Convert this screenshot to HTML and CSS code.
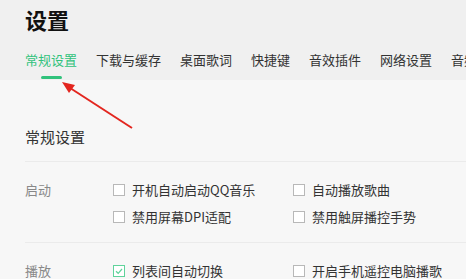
FILE: index.html
```html
<!DOCTYPE html>
<html lang="zh">
<head>
<meta charset="utf-8">
<link rel="stylesheet" href="styles.css">
</head>
<body>
<header class="header">
  <h1 class="title">设置</h1>
  <nav class="tabs">
    <div class="tab active"><span>常规设置</span><i class="bar"></i></div>
    <div class="tab"><span>下载与缓存</span><i class="bar"></i></div>
    <div class="tab"><span>桌面歌词</span><i class="bar"></i></div>
    <div class="tab"><span>快捷键</span><i class="bar"></i></div>
    <div class="tab"><span>音效插件</span><i class="bar"></i></div>
    <div class="tab"><span>网络设置</span><i class="bar"></i></div>
    <div class="tab"><span>音频</span><i class="bar"></i></div>
  </nav>
</header>
<main class="content">
  <h2 class="section-title">常规设置</h2>
  <div class="group">
    <div class="label">启动</div>
    <label class="opt"><span class="box"></span>开机自动启动QQ音乐</label>
    <label class="opt"><span class="box"></span>自动播放歌曲</label>
    <div></div>
    <label class="opt"><span class="box"></span>禁用屏幕DPI适配</label>
    <label class="opt"><span class="box"></span>禁用触屏播控手势</label>
  </div>
  <div class="group">
    <div class="label">播放</div>
    <label class="opt"><span class="box checked"><svg viewBox="0 0 12 12" width="12" height="12"><path d="M3 6.2 L5.2 8.3 L9 4" fill="none" stroke="#5fd39b" stroke-width="1.2"/></svg></span>列表间自动切换</label>
    <label class="opt"><span class="box"></span>开启手机遥控电脑播歌</label>
  </div>
</main>
<svg class="arrow" width="466" height="279" viewBox="0 0 466 279">
  <line x1="132" y1="128" x2="67" y2="86" stroke="#e3261f" stroke-width="2"/>
  <polygon points="62,82 75,85 69,93" fill="#e3261f"/>
</svg>
</body>
</html>
```
FILE: styles.css
```css
* { box-sizing: border-box; margin: 0; padding: 0; }
html, body { width: 466px; height: 279px; overflow: hidden; }
body {
  background: #f7f7f7;
  font-family: "Noto Sans CJK SC", "Noto Sans", sans-serif;
  color: #333;
  position: relative;
}
.header {
  background: #f0f0f0;
  height: 80px;
  padding: 4px 0 0 25px;
}
.title {
  font-size: 22px;
  font-weight: 700;
  line-height: 30px;
  color: #111;
}
.tabs {
  display: flex;
  gap: 19px;
  margin-top: 16px;
  white-space: nowrap;
}
.tab {
  display: flex;
  flex-direction: column;
  align-items: center;
  font-size: 13px;
  line-height: 20px;
  color: #333;
}
.tab .bar {
  display: block;
  width: 21px;
  height: 3px;
  margin-top: 6px;
  border-radius: 2px;
  background: transparent;
}
.tab.active { color: #31c27c; }
.tab.active .bar { background: #31c27c; }
.content {
  padding-left: 25px;
}
.section-title {
  font-size: 15px;
  font-weight: 400;
  line-height: 22px;
  margin-top: 46px;
  padding-bottom: 13px;
  border-bottom: 1px solid #ebebeb;
}
.group {
  display: grid;
  grid-template-columns: 88px 180px 1fr;
  grid-auto-rows: 27px;
  padding: 14px 0 12px;
  border-bottom: 1px solid #ebebeb;
  font-size: 13px;
  align-items: center;
  white-space: nowrap;
}
.label { color: #888; }
.opt {
  display: flex;
  align-items: center;
  gap: 7px;
  color: #333;
}
.box {
  width: 12px;
  height: 12px;
  border: 1px solid #b8b8b8;
  background: #fff;
  display: block;
  flex: none;
  position: relative;
}
.box.checked { border-color: #5fd39b; }
.box svg { position: absolute; left: -1px; top: -1px; }
.arrow {
  position: absolute;
  left: 0;
  top: 0;
  pointer-events: none;
}
```
